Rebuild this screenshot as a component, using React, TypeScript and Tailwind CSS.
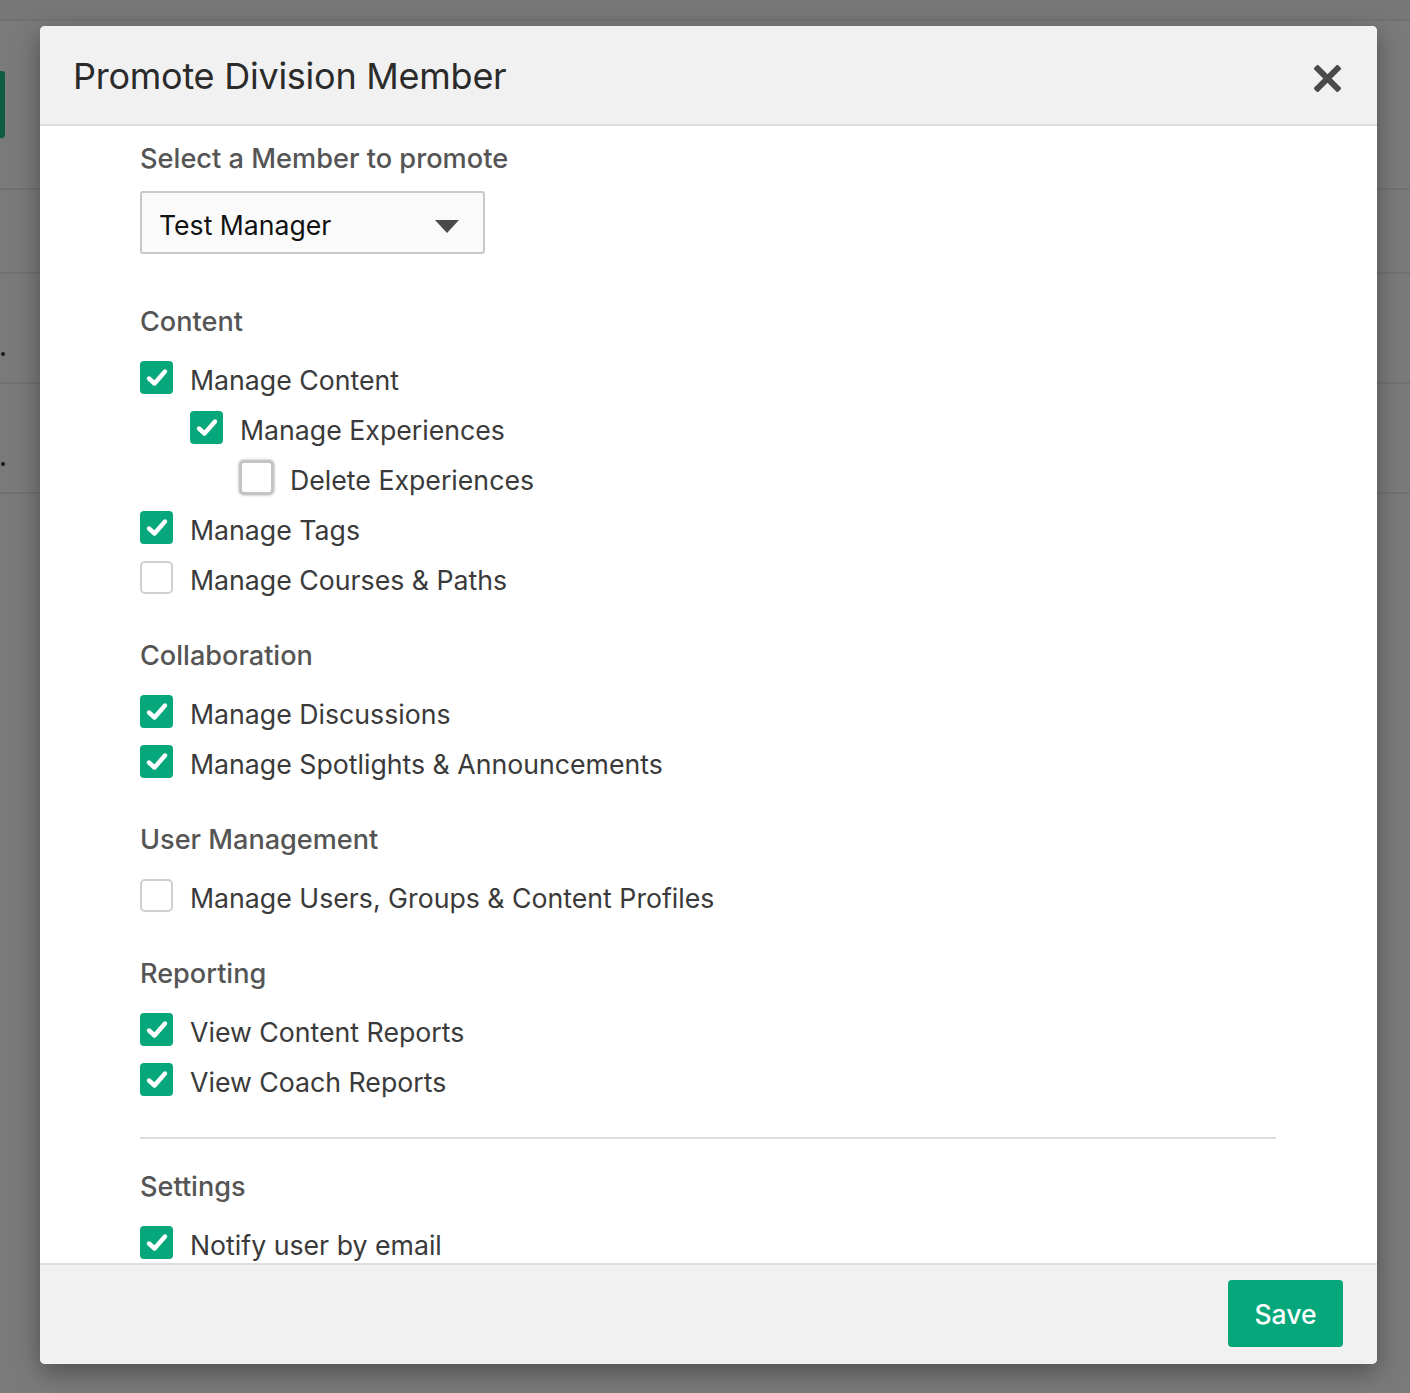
const font = "font-['Inter',sans-serif]"

function Check({ checked, focused }: { checked?: boolean; focused?: boolean }) {
  if (checked) {
    return (
      <span className="h-[33px] w-[33px] shrink-0 rounded-[4px] bg-[#07a77c]">
        <svg viewBox="0 0 33 33" className="h-[33px] w-[33px]" fill="none" stroke="#fff" strokeWidth="4.4" strokeLinecap="round" strokeLinejoin="round">
          <path d="M9 17.5 L14.5 22.5 L25 10.5" />
        </svg>
      </span>
    )
  }
  return (
    <span className={`shrink-0 rounded-[5px] bg-white ${focused ? "mx-[-1px] h-[35px] w-[35px] border-[3px] border-[#c4c4c4] shadow-[0_0_3px_#aaa]" : "h-[33px] w-[33px] border-2 border-[#cfcfcf]"}`} />
  )
}

function Row({ label, checked, focused, indent = 0 }: { label: string; checked?: boolean; focused?: boolean; indent?: 0 | 1 | 2 }) {
  const pad = indent === 2 ? "pl-[100px]" : indent === 1 ? "pl-[50px]" : ""
  return (
    <div className={`flex h-[50px] items-center gap-[17px] text-[26.7px] leading-none text-[#3a3a3a] ${pad}`}>
      <Check checked={checked} focused={focused} />
      <span className="relative top-[3px]">{label}</span>
    </div>
  )
}

function Section({ title, children }: { title: string; children: React.ReactNode }) {
  return (
    <section className="mb-[38px]">
      <h3 className="mb-[14px] h-[32px] text-[27.1px] font-medium leading-[32px] text-[#555]">{title}</h3>
      {children}
    </section>
  )
}

export default function App() {
  return (
    <div className={`relative h-[1393px] w-[1410px] overflow-hidden bg-[#7a7a7a] ${font}`}>
      {/* dimmed page behind the modal */}
      <div className="h-[21px] border-b-2 border-[#717171] bg-[#777]" />
      <div className="h-[169px] border-b-2 border-[#717171] pt-[50px]">
        <div className="h-[67px] w-[5px] rounded-r-[3px] bg-[#0f5c45]" />
      </div>
      <div className="h-[84px] border-b-2 border-[#717171]" />
      <div className="flex h-[110px] items-end border-b-2 border-[#717171] pb-[26px] pl-[1px]">
        <span className="h-[4px] w-[4px] rounded-full bg-[#1a1a1a]" />
      </div>
      <div className="flex h-[110px] items-end border-b-2 border-[#717171] pb-[26px] pl-[1px]">
        <span className="h-[4px] w-[4px] rounded-full bg-[#1a1a1a]" />
      </div>

      <div className="absolute left-[40px] top-[26px] flex h-[1338px] w-[1337px] flex-col overflow-hidden rounded-[5px] bg-white shadow-[0_8px_24px_rgba(0,0,0,0.35)]">
        <header className="flex h-[100px] shrink-0 items-center justify-between border-b-2 border-[#dfdfdf] bg-[#f1f1f1] pl-[33px] pr-[36px]">
          <h2 className="relative top-[1px] text-[36px] font-normal leading-none tracking-[-0.25px] text-[#2b2b2b]">Promote Division Member</h2>
          <svg viewBox="0 0 26 26" className="mt-[6px] h-[27px] w-[27px]" fill="none" stroke="#4a4a4a" strokeWidth="5.8" strokeLinecap="square">
            <path d="M3.5 3.5 L22.5 22.5 M22.5 3.5 L3.5 22.5" />
          </svg>
        </header>

        <div className="min-h-0 flex-1 overflow-hidden pl-[100px] pr-[101px] pt-[17px]">
          <div className="h-[32px] text-[27.2px] font-medium leading-[32px] text-[#555]">Select a Member to promote</div>
          <div className="mb-[52px] mt-[16px] flex h-[63px] w-[345px] items-center justify-between rounded-[3px] border-2 border-[#c9c9c9] bg-[#fafafa] pl-[17px] pr-[24px] text-[26.6px] text-[#111]">
            <span className="relative top-[3px]">Test Manager</span>
            <span className="relative top-[4px] h-0 w-0 border-x-[12px] border-t-[13px] border-x-transparent border-t-[#4a4a4a]" />
          </div>

          <Section title="Content">
            <Row label="Manage Content" checked />
            <Row label="Manage Experiences" checked indent={1} />
            <Row label="Delete Experiences" focused indent={2} />
            <Row label="Manage Tags" checked />
            <Row label="Manage Courses & Paths" />
          </Section>
          <Section title="Collaboration">
            <Row label="Manage Discussions" checked />
            <Row label="Manage Spotlights & Announcements" checked />
          </Section>
          <Section title="User Management">
            <Row label="Manage Users, Groups & Content Profiles" />
          </Section>
          <Section title="Reporting">
            <Row label="View Content Reports" checked />
            <Row label="View Coach Reports" checked />
          </Section>
          <hr className="-mt-[5px] mb-[32px] border-t-2 border-[#dcdcdc]" />
          <Section title="Settings">
            <Row label="Notify user by email" checked />
          </Section>
        </div>

        <footer className="flex h-[101px] shrink-0 items-center justify-end border-t-2 border-[#dfdfdf] bg-[#f1f1f1] pb-[2px] pr-[34px]">
          <button className="h-[67px] w-[115px] rounded-[4px] bg-[#07a77c] pt-[2px] text-[26.5px] font-medium text-white">Save</button>
        </footer>
      </div>
    </div>
  )
}
